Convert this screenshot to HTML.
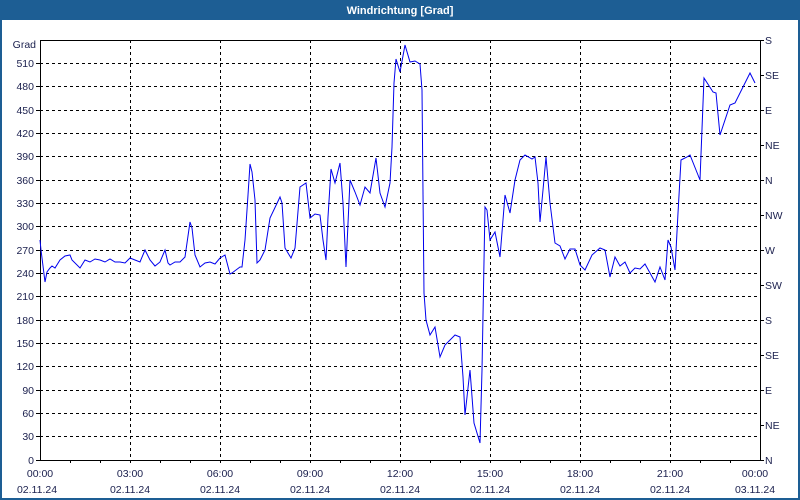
<!DOCTYPE html>
<html><head><meta charset="utf-8"><style>
html,body{margin:0;padding:0;width:800px;height:500px;overflow:hidden;background:#fff}
svg{display:block}
text{font-family:"Liberation Sans",sans-serif;font-size:10.5px;fill:#1a1f4d}
</style></head><body>
<svg width="800" height="500" viewBox="0 0 800 500">
<rect x="0" y="0" width="800" height="500" fill="#1d5e94"/>
<rect x="2" y="20" width="796" height="478" fill="#fff"/>
<text x="400" y="14" text-anchor="middle" style="fill:#fff;font-weight:bold;font-size:11px">Windrichtung [Grad]</text>
<g stroke="#000" stroke-width="1" stroke-dasharray="3,3" shape-rendering="crispEdges">
<path d="M40 63.5H760M40 86.5H760M40 110.5H760M40 133.5H760M40 156.5H760M40 180.5H760M40 203.5H760M40 226.5H760M40 250.5H760M40 273.5H760M40 296.5H760M40 320.5H760M40 343.5H760M40 366.5H760M40 390.5H760M40 413.5H760M40 436.5H760"/>
<path d="M130.5 40V460M220.5 40V460M310.5 40V460M400.5 40V460M490.5 40V460M580.5 40V460M670.5 40V460"/>
</g>
<g stroke="#000" stroke-width="1" fill="none" shape-rendering="crispEdges">
<path d="M40.5 40V460.5H760.5V40M40 40.5H760"/>
<path d="M36 63.5H40M36 86.5H40M36 110.5H40M36 133.5H40M36 156.5H40M36 180.5H40M36 203.5H40M36 226.5H40M36 250.5H40M36 273.5H40M36 296.5H40M36 320.5H40M36 343.5H40M36 366.5H40M36 390.5H40M36 413.5H40M36 436.5H40M36 460.5H40"/>
<path d="M760 40.5H764M760 75.5H764M760 110.5H764M760 145.5H764M760 180.5H764M760 215.5H764M760 250.5H764M760 285.5H764M760 320.5H764M760 355.5H764M760 390.5H764M760 425.5H764M760 460.5H764"/>
<path d="M70.5 460V463M100.5 460V463M130.5 460V463M160.5 460V463M190.5 460V463M220.5 460V463M250.5 460V463M280.5 460V463M310.5 460V463M340.5 460V463M370.5 460V463M400.5 460V463M430.5 460V463M460.5 460V463M490.5 460V463M520.5 460V463M550.5 460V463M580.5 460V463M610.5 460V463M640.5 460V463M670.5 460V463M700.5 460V463M730.5 460V463"/>
</g>
<polyline fill="none" stroke="#0000ee" stroke-width="1" points="40,240 41,250 43,266 45,282 47,272 50,268 52,266 55,268 60,260 65,256 70,255 72,260 80,268 85,260 90,262 95,259 100,260 105,262 110,259 115,262 120,262 125,263 130,258 135,260 140,262 145,250 150,260 155,266 160,262 165,250 168,263 170,265 175,262 180,262 185,257 190,222 192,228 195,255 200,267 205,263 210,262 215,264 220,258 225,255 230,274 232,273 240,267 242,267 245,240 248,195 250,164 252,172 255,200 257,263 260,260 265,250 270,218 280,197 282,203 285,248 291,258 295,248 300,187 306,183 310,218 315,214 320,215 323,240 326,260 328,217 331,169 335,183 340,163 343,203 346,267 350,180 355,192 360,205 365,187 370,193 376,158 380,193 385,207 390,183 392,147 394,83 396,59 400,72 405,45 410,62 415,61 420,64 422,90 423,193 424,293 426,320 430,335 435,327 440,357 445,345 455,335 460,337 463,377 465,415 470,370 474,423 480,443 482,370 485,207 487,210 490,240 495,232 500,257 505,195 510,213 515,180 520,160 525,155 532,159 535,157 538,183 540,222 543,190 546,157 550,203 555,243 560,246 565,259 570,249 575,249 580,265 585,270 592,255 600,248 605,250 610,277 615,257 620,266 625,262 630,273 635,268 640,269 645,264 650,273 655,282 660,267 665,280 668,240 671,247 675,270 678,213 681,160 687,157 690,155 700,180 704,78 713,92 716,93 720,135 730,105 735,103 745,83 750,73 755,83"/>
<g text-anchor="end">
<text x="36" y="48">Grad</text>
<text x="34" y="67">510</text><text x="34" y="90">480</text><text x="34" y="114">450</text><text x="34" y="137">420</text><text x="34" y="160">390</text><text x="34" y="184">360</text><text x="34" y="207">330</text><text x="34" y="230">300</text><text x="34" y="254">270</text><text x="34" y="277">240</text><text x="34" y="300">210</text><text x="34" y="324">180</text><text x="34" y="347">150</text><text x="34" y="370">120</text><text x="34" y="394">90</text><text x="34" y="417">60</text><text x="34" y="440">30</text><text x="34" y="464">0</text>
</g>
<g>
<text x="765" y="44">S</text><text x="765" y="79">SE</text><text x="765" y="114">E</text><text x="765" y="149">NE</text><text x="765" y="184">N</text><text x="765" y="219">NW</text><text x="765" y="254">W</text><text x="765" y="289">SW</text><text x="765" y="324">S</text><text x="765" y="359">SE</text><text x="765" y="394">E</text><text x="765" y="429">NE</text><text x="765" y="464">N</text>
</g>
<g text-anchor="middle">
<text x="40" y="477">00:00</text><text x="130" y="477">03:00</text><text x="220" y="477">06:00</text><text x="310" y="477">09:00</text><text x="400" y="477">12:00</text><text x="490" y="477">15:00</text><text x="580" y="477">18:00</text><text x="670" y="477">21:00</text><text x="755" y="477">00:00</text>
<text x="37" y="493">02.11.24</text><text x="130" y="493">02.11.24</text><text x="220" y="493">02.11.24</text><text x="310" y="493">02.11.24</text><text x="400" y="493">02.11.24</text><text x="490" y="493">02.11.24</text><text x="580" y="493">02.11.24</text><text x="670" y="493">02.11.24</text><text x="755" y="493">03.11.24</text>
</g>
</svg>
</body></html>
